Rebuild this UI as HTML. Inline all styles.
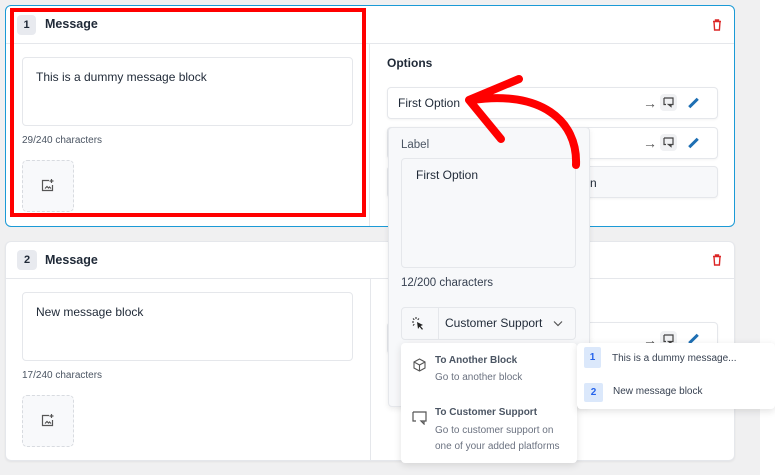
<!DOCTYPE html>
<html><head><style>
*{box-sizing:border-box;margin:0;padding:0}
body{width:775px;height:475px;overflow:hidden;background:#f0f0f1;font-family:"Liberation Sans",sans-serif;color:#1f2937;position:relative}
.abs{position:absolute}
.card{position:absolute;left:5px;width:730px;background:#fff;border-radius:6px}
.hdr{position:absolute;left:0;right:0;top:0;border-bottom:1px solid #e5e7eb}
.badge{position:absolute;left:11px;width:19px;height:20px;background:#e8eaef;border-radius:4px;font-size:11px;font-weight:bold;text-align:center;line-height:20px}
.title{position:absolute;left:39px;font-size:12.5px;font-weight:bold}
.ta{position:absolute;border:1px solid #e5e7eb;border-radius:4px;font-size:12px;padding:12px 13px}
.cnt{position:absolute;font-size:10px;color:#4b5563}
.img{position:absolute;width:52px;height:52px;border:1px dashed #d8dbe0;border-radius:5px;background:#f8f9fb}
.row{position:absolute;left:387px;width:331px;height:32px;border:1px solid #e5e7eb;border-radius:4px;background:#fff;box-shadow:0 1px 2px rgba(0,0,0,.05);font-size:12px}
.ic{position:absolute;font-size:14px;color:#555;line-height:14px}
</style></head><body>
<div class="abs" style="left:760px;top:0;width:15px;height:475px;background:#fff"></div>

<div class="card" style="top:5px;height:222px;border:1px solid #1b9ad6">
 <div class="hdr" style="height:38px"></div>
 <div class="badge" style="top:9px">1</div>
 <div class="title" style="top:11px">Message</div>
 <svg class="abs" style="left:706px;top:13px" width="10" height="12" viewBox="0 0 10 12"><path d="M1 2.5h8M3.5 2.5V1h3v1.5M2 2.5l.6 8.5h4.8l.6-8.5" fill="none" stroke="#dc2626" stroke-width="1.4"/></svg>
 <div class="abs" style="left:363px;top:38px;width:1px;height:182px;background:#e5e7eb"></div>
</div>
<div class="ta" style="left:22px;top:57px;width:331px;height:69px">This is a dummy message block</div>
<div class="cnt" style="left:22px;top:135px">29/240 characters</div>
<div class="img" style="left:22px;top:160px"></div>
<svg class="abs" style="left:41px;top:179px" width="14" height="13" viewBox="0 0 14 13"><path d="M8 1.5H1.5v10h10V6M4 9.5l2-2 1.5 1.5 1-1 1.5 1.5" fill="none" stroke="#555" stroke-width="1.2"/><path d="M10.5 0v4M8.5 2h4" stroke="#555" stroke-width="1.2"/></svg>
<div class="abs" style="left:387px;top:56px;font-size:12px;font-weight:bold">Options</div>
<div class="row" style="top:87px"><span class="abs" style="left:10px;top:8px">First Option</span></div>
<div class="row" style="top:127px"></div>
<div class="row" style="top:166px;background:#f7f8fa"><span class="abs" style="left:202px;top:9px">n</span></div>
<div class="ic" style="left:643px;top:96px">→</div><div class="abs" style="left:660px;top:94px;width:17px;height:17px;background:#f0f1f3;border-radius:4px"></div>
<svg class="abs" style="left:663px;top:97px" width="11" height="11" viewBox="0 0 11 11"><path d="M1 1h9v6.5H5.5L8 9.5V7.5M1 1v6.5h2" fill="none" stroke="#444" stroke-width="1.2"/></svg>
<div class="abs" style="left:692px;top:97px;width:3px;height:12px;background:#1e6fb3;transform:rotate(45deg)"></div>
<div class="ic" style="left:643px;top:136px">→</div><div class="abs" style="left:660px;top:134px;width:17px;height:17px;background:#f0f1f3;border-radius:4px"></div>
<svg class="abs" style="left:663px;top:137px" width="11" height="11" viewBox="0 0 11 11"><path d="M1 1h9v6.5H5.5L8 9.5V7.5M1 1v6.5h2" fill="none" stroke="#444" stroke-width="1.2"/></svg>
<div class="abs" style="left:692px;top:137px;width:3px;height:12px;background:#1e6fb3;transform:rotate(45deg)"></div>

<div class="card" style="top:241px;height:220px;border:1px solid #e5e7eb;box-shadow:0 1px 2px rgba(0,0,0,.06)">
 <div class="hdr" style="height:37px"></div>
 <div class="badge" style="top:8px;width:20px">2</div>
 <div class="title" style="top:11px">Message</div>
 <svg class="abs" style="left:706px;top:12px" width="10" height="12" viewBox="0 0 10 12"><path d="M1 2.5h8M3.5 2.5V1h3v1.5M2 2.5l.6 8.5h4.8l.6-8.5" fill="none" stroke="#dc2626" stroke-width="1.4"/></svg>
 <div class="abs" style="left:364px;top:37px;width:1px;height:182px;background:#e5e7eb"></div>
</div>
<div class="ta" style="left:22px;top:292px;width:331px;height:69px">New message block</div>
<div class="cnt" style="left:22px;top:370px">17/240 characters</div>
<div class="img" style="left:22px;top:395px"></div>
<svg class="abs" style="left:41px;top:414px" width="14" height="13" viewBox="0 0 14 13"><path d="M8 1.5H1.5v10h10V6M4 9.5l2-2 1.5 1.5 1-1 1.5 1.5" fill="none" stroke="#555" stroke-width="1.2"/><path d="M10.5 0v4M8.5 2h4" stroke="#555" stroke-width="1.2"/></svg>
<div class="row" style="top:322px"></div>
<div class="ic" style="left:643px;top:333px">→</div><div class="abs" style="left:660px;top:331px;width:17px;height:17px;background:#f0f1f3;border-radius:4px"></div>
<svg class="abs" style="left:663px;top:334px" width="11" height="11" viewBox="0 0 11 11"><path d="M1 1h9v6.5H5.5L8 9.5V7.5M1 1v6.5h2" fill="none" stroke="#444" stroke-width="1.2"/></svg>
<div class="abs" style="left:692px;top:333px;width:3px;height:12px;background:#1e6fb3;transform:rotate(45deg)"></div>

<div class="abs" style="left:388px;top:127px;width:202px;height:280px;background:#f7f8fa;border:1px solid #e5e7eb;border-radius:4px;box-shadow:0 2px 6px rgba(0,0,0,.08)"></div>
<div class="abs" style="left:401px;top:139px;font-size:11.5px;color:#4b5563">Label</div>
<div class="ta" style="left:401px;top:158px;width:175px;height:110px;padding:9px 14px;background:#f7f8fa">First Option</div>
<div class="abs" style="left:401px;top:277px;font-size:11.5px;color:#374151">12/200 characters</div>
<div class="abs" style="left:401px;top:307px;width:175px;height:33px;border:1px solid #e5e7eb;border-radius:4px"></div>
<div class="abs" style="left:438px;top:308px;width:1px;height:31px;background:#e5e7eb"></div>
<svg class="abs" style="left:411px;top:317px" width="14" height="13" viewBox="0 0 14 13"><path d="M6 5l6 3-2.5 1 2.5 3-1 .8-2.5-3L7 12z" fill="#222"/><path d="M1 5h2M5 0v2M2 1.5l1.3 1.3M8 1.5L6.7 2.8M2 8.5l1.3-1.3" stroke="#222" stroke-width="1"/></svg>
<div class="abs" style="left:445px;top:316px;font-size:12px;color:#1f2937">Customer Support</div>
<svg class="abs" style="left:553px;top:320px" width="10" height="7" viewBox="0 0 10 7"><path d="M1 1.5l4 4 4-4" fill="none" stroke="#555" stroke-width="1.2"/></svg>

<div class="abs" style="left:401px;top:343px;width:176px;height:120px;background:#fff;border-radius:4px;box-shadow:0 2px 8px rgba(0,0,0,.12)"></div>
<svg class="abs" style="left:413px;top:358px" width="13" height="14" viewBox="0 0 13 14"><path d="M6.5 1L12 4v6l-5.5 3L1 10V4zM1 4l5.5 3L12 4M6.5 7v6" fill="none" stroke="#555" stroke-width="1.1"/></svg>
<div class="abs" style="left:435px;top:355px;font-size:10px;font-weight:bold;color:#4b5563">To Another Block</div>
<div class="abs" style="left:435px;top:372px;font-size:10px;color:#6b7280">Go to another block</div>
<svg class="abs" style="left:412px;top:411px" width="15" height="14" viewBox="0 0 15 14"><path d="M1 1h13v9H9l3 3V10M1 1v9h3" fill="none" stroke="#555" stroke-width="1.2"/></svg>
<div class="abs" style="left:435px;top:407px;font-size:10px;font-weight:bold;color:#4b5563">To Customer Support</div>
<div class="abs" style="left:435px;top:423px;font-size:10px;color:#6b7280;line-height:16px">Go to customer support on<br>one of your added platforms</div>

<div class="abs" style="left:577px;top:343px;width:198px;height:66px;background:#fff;border-radius:4px;box-shadow:0 2px 8px rgba(0,0,0,.12)"></div>
<div class="abs" style="left:584px;top:347px;width:17px;height:21px;background:#dbe8fb;color:#2563eb;font-size:10px;font-weight:bold;text-align:center;line-height:21px;border-radius:2px">1</div>
<div class="abs" style="left:612px;top:353px;font-size:10px;color:#374151">This is a dummy message...</div>
<div class="abs" style="left:584px;top:383px;width:19px;height:19px;background:#dbe8fb;color:#2563eb;font-size:10px;font-weight:bold;text-align:center;line-height:19px;border-radius:2px">2</div>
<div class="abs" style="left:613px;top:386px;font-size:10px;color:#374151">New message block</div>

<div class="abs" style="left:10px;top:8px;width:356px;height:209px;border:4px solid #f00"></div>
<svg class="abs" style="left:0;top:0" width="775" height="475" viewBox="0 0 775 475"><path d="M576 165C578 120 540 90 472 100M469 100L519 79M469 100L501 139" fill="none" stroke="#f00" stroke-width="8" stroke-linecap="round" stroke-linejoin="round"/></svg>
</body></html>
